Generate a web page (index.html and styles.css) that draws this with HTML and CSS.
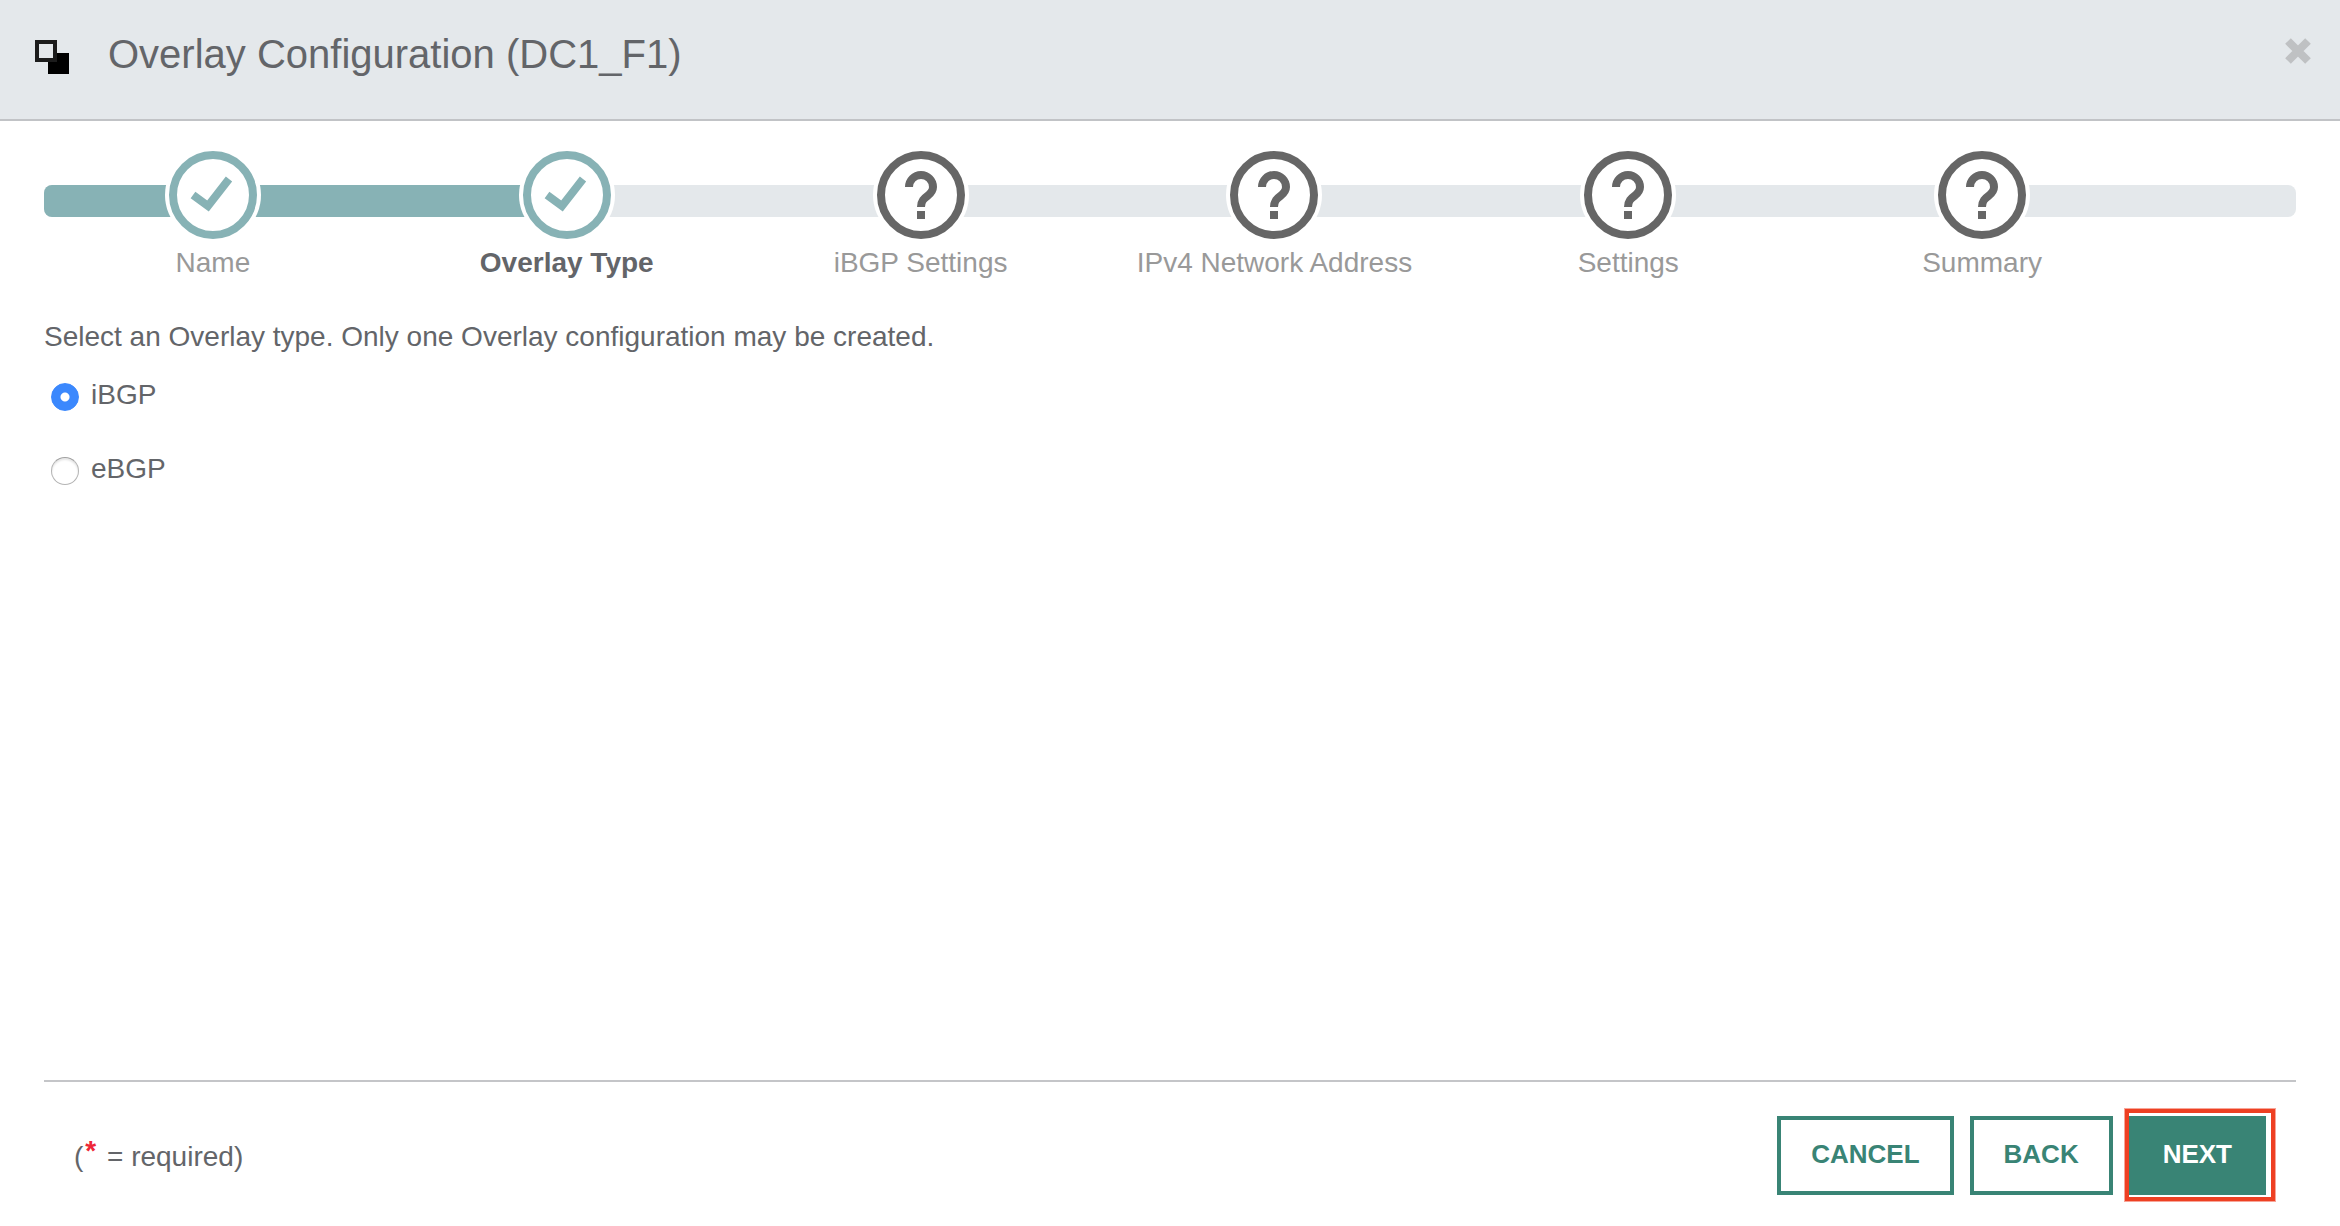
FILE: index.html
```
<!DOCTYPE html>
<html lang="en">
<head>
<meta charset="utf-8">
<title>Overlay Configuration (DC1_F1)</title>
<link rel="stylesheet" href="styles.css">
</head>
<body>
<div class="dialog">
  <header class="header">
    <svg class="header-icon" viewBox="0 0 36 36" aria-hidden="true">
      <rect x="14" y="14" width="21" height="21" fill="#000"/>
      <rect x="3" y="3" width="18" height="18" fill="#e4e8eb" stroke="#1c1c1c" stroke-width="4"/>
    </svg>
    <h1 class="title">Overlay Configuration (DC1_F1)</h1>
    <button class="close" type="button" aria-label="Close">
      <svg viewBox="0 0 28 28" aria-hidden="true"><path d="M4 4l20 20M24 4L4 24"/></svg>
    </button>
  </header>

  <main class="content">
    <nav class="wizard" aria-label="Progress">
      <div class="track"><div class="track-done"></div></div>
      <ol class="steps">
        <li class="step done">
          <svg class="step-icon" viewBox="0 0 96 96" aria-hidden="true"><circle class="halo" cx="48" cy="48" r="48"/><circle class="ring" cx="48" cy="48" r="40"/><path class="tick" d="M28 48L43 59L64 32"/></svg>
          <span class="step-label">Name</span>
        </li>
        <li class="step done current" aria-current="step">
          <svg class="step-icon" viewBox="0 0 96 96" aria-hidden="true"><circle class="halo" cx="48" cy="48" r="48"/><circle class="ring" cx="48" cy="48" r="40"/><path class="tick" d="M28 48L43 59L64 32"/></svg>
          <span class="step-label">Overlay Type</span>
        </li>
        <li class="step">
          <svg class="step-icon" viewBox="0 0 96 96" aria-hidden="true"><circle class="halo" cx="48" cy="48" r="48"/><circle class="ring" cx="48" cy="48" r="40"/><path class="query" d="M36 40a12 12 0 0 1 24 0c0 10-12 8-12 20M48 64v8"/></svg>
          <span class="step-label">iBGP Settings</span>
        </li>
        <li class="step">
          <svg class="step-icon" viewBox="0 0 96 96" aria-hidden="true"><circle class="halo" cx="48" cy="48" r="48"/><circle class="ring" cx="48" cy="48" r="40"/><path class="query" d="M36 40a12 12 0 0 1 24 0c0 10-12 8-12 20M48 64v8"/></svg>
          <span class="step-label">IPv4 Network Address</span>
        </li>
        <li class="step">
          <svg class="step-icon" viewBox="0 0 96 96" aria-hidden="true"><circle class="halo" cx="48" cy="48" r="48"/><circle class="ring" cx="48" cy="48" r="40"/><path class="query" d="M36 40a12 12 0 0 1 24 0c0 10-12 8-12 20M48 64v8"/></svg>
          <span class="step-label">Settings</span>
        </li>
        <li class="step">
          <svg class="step-icon" viewBox="0 0 96 96" aria-hidden="true"><circle class="halo" cx="48" cy="48" r="48"/><circle class="ring" cx="48" cy="48" r="40"/><path class="query" d="M36 40a12 12 0 0 1 24 0c0 10-12 8-12 20M48 64v8"/></svg>
          <span class="step-label">Summary</span>
        </li>
      </ol>
    </nav>

    <fieldset class="choices">
      <legend class="prompt">Select an Overlay type. Only one Overlay configuration may be created.</legend>
      <div class="choice">
        <input class="radio" type="radio" name="overlay" id="ibgp" checked>
        <label for="ibgp">iBGP</label>
      </div>
      <div class="choice">
        <input class="radio" type="radio" name="overlay" id="ebgp">
        <label for="ebgp">eBGP</label>
      </div>
    </fieldset>
  </main>

  <footer class="footer">
    <p class="required">(<span class="star">*</span> = required)</p>
    <div class="actions">
      <button class="button" type="button">CANCEL</button>
      <button class="button" type="button">BACK</button>
      <button class="button primary" type="button">NEXT</button>
    </div>
  </footer>
</div>
</body>
</html>
```
FILE: styles.css
```
* {
  box-sizing: border-box;
}

body {
  margin: 0;
  background: #fff;
  color: #636569;
  font-family: "Liberation Sans", Arial, sans-serif;
  font-size: 28px;
  line-height: 32px;
}

.dialog {
  display: flex;
  flex-direction: column;
  min-height: 100vh;
}

.header {
  display: flex;
  align-items: flex-start;
  padding: 32px 28px 42px 34px;
  background: #e4e8eb;
  border-bottom: 2px solid #c1c3c6;
}

.header-icon {
  width: 36px;
  height: 36px;
  margin: 7px 38px 0 0;
}

.title {
  flex: 1;
  margin: 0;
  font-size: 40px;
  font-weight: 400;
  line-height: 45px;
}

.close {
  width: 28px;
  height: 28px;
  margin-top: 5px;
  padding: 0;
  border: 0;
  background: none;
}

.close svg {
  display: block;
  width: 28px;
  height: 28px;
  fill: none;
  stroke: #bfc1c3;
  stroke-width: 8;
}

.content {
  flex: 1;
  padding: 26px 44px 0;
}

.wizard {
  display: grid;
}

.track,
.steps {
  grid-area: 1 / 1;
}

.track {
  height: 32px;
  margin-top: 38px;
  border-radius: 8px;
  background: #e4e8eb;
  overflow: hidden;
}

.track-done {
  width: 23%;
  height: 100%;
  background: #87b2b5;
}

.steps {
  display: grid;
  grid-template-columns: repeat(6, 1fr);
  margin: 0 0 0 -8px;
  padding: 0 137px 0 0;
  list-style: none;
}

.step {
  display: flex;
  flex-direction: column;
  align-items: center;
  color: #999;
  white-space: nowrap;
}

.step-icon {
  width: 96px;
  height: 96px;
  fill: none;
  stroke: #666;
  stroke-width: 8;
}

.done .step-icon {
  stroke: #87b2b5;
}

.step-icon .halo {
  fill: #fff;
  stroke: none;
}

.step-label {
  margin-top: 4px;
}

.current .step-label {
  color: #636569;
  font-weight: 700;
}

.choices {
  margin: 42px 0 0;
  padding: 0;
  border: 0;
}

.prompt {
  margin: 0 0 26px;
  padding: 0;
}

.choice {
  display: flex;
  gap: 12px;
  padding-left: 7px;
  margin-bottom: 42px;
}

.radio {
  appearance: none;
  width: 28px;
  height: 28px;
  margin: 4px 0 0;
  border: 1px solid #b4b4b4;
  border-top-color: #a0a0a0;
  border-radius: 50%;
  background: #fff;
  box-shadow: inset 0 2px 2px #e6e6e6;
}

.radio:checked {
  border-color: #3b88fd;
  background: radial-gradient(circle, #fff 4px, #3b88fd 5px);
  box-shadow: none;
}

.footer {
  display: flex;
  justify-content: space-between;
  align-items: flex-start;
  margin: 0 44px;
  padding: 34px 30px 31px;
  border-top: 2px solid #c4c5c8;
}

.required {
  margin: 25px 0 0;
}

.star {
  margin: 0 3px 0 2px;
  color: #ee2737;
  font-weight: 700;
  line-height: 0;
  vertical-align: 6px;
}

.actions {
  display: flex;
  gap: 16px;
}

.button {
  position: relative;
  height: 79px;
  padding: 0 30px 3px;
  border: 4px solid #398475;
  background: #fff;
  color: #398475;
  font: 700 26px/32px "Liberation Sans", Arial, sans-serif;
}

.primary {
  background: #398475;
  color: #fff;
}

/* Highlight frame around the suggested action */
.primary::after {
  content: "";
  position: absolute;
  inset: -12px -14px -11px -9px;
  border: 5px solid #ee4023;
  outline: 1px solid #f7a598;
  outline-offset: -1px;
}
```
